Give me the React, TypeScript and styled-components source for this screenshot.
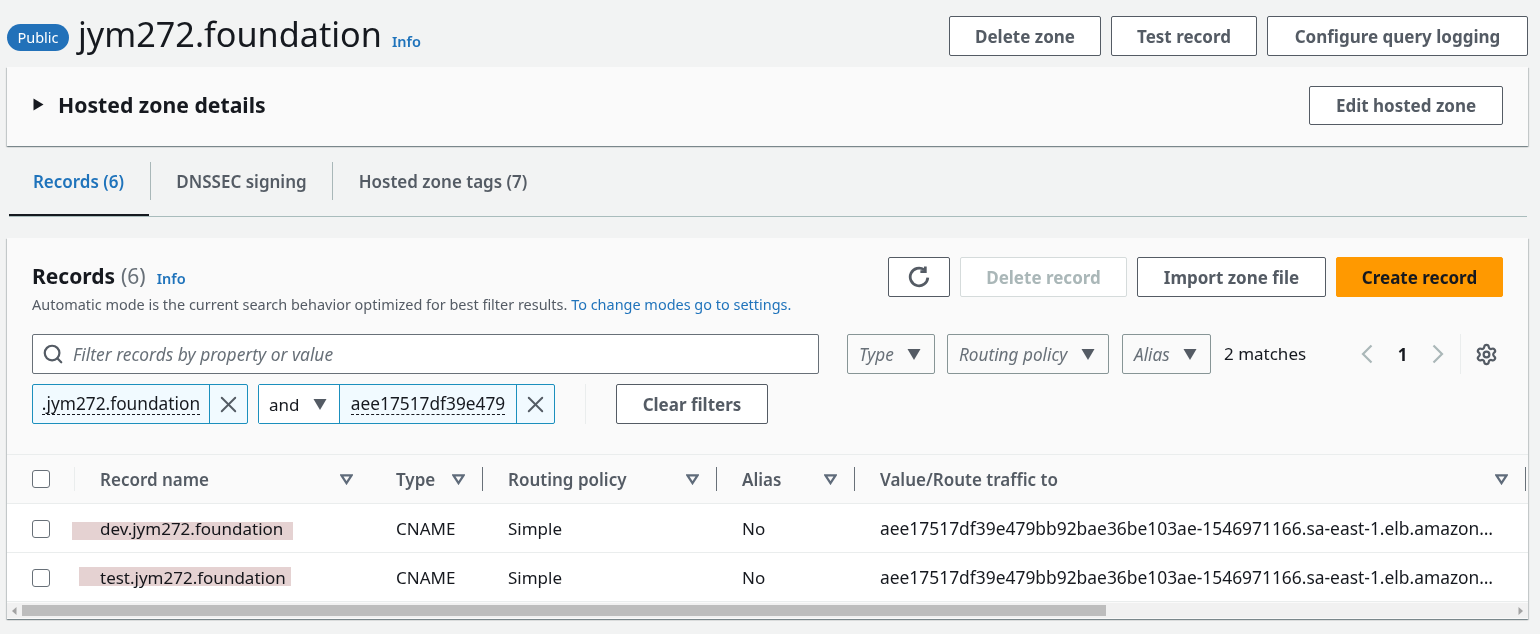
import styled, { createGlobalStyle } from 'styled-components';
import { Search, Settings, X } from 'lucide-react';

const GlobalStyle = createGlobalStyle`
	html, body {
		margin: 0;
		background: #f2f3f3;
		color: #16191f;
		font-family: "Noto Sans", "Open Sans", sans-serif;
	}
	a { text-decoration: none; }
	* { box-sizing: border-box; }
`;

const Page = styled.div`
	width: 1540px;
	height: 634px;
	overflow: hidden;
	padding: 16px 12px 0 7px;
`;

const HeaderRow = styled.header`
	display: flex;
	align-items: flex-start;
	justify-content: space-between;
	height: 51px;
`;

const TitleGroup = styled.div`
	display: flex;
	align-items: center;
	height: 36px;
`;

const Badge = styled.span`
	display: inline-flex;
	align-items: center;
	justify-content: center;
	width: 62px;
	height: 27px;
	margin: 6px 9px 0 0;
	border-radius: 14px;
	background: #2271b9;
	color: #fff;
	font-size: 14.5px;
`;

const Title = styled.h1`
	margin: 0;
	font-size: 34.2px;
	font-weight: 400;
	line-height: 36px;
`;

const InfoLink = styled.a`
	color: #1f73bb;
	font-size: 14.5px;
	font-weight: 600;
`;

const TitleInfo = styled(InfoLink)`
	margin: 14px 0 0 10px;
`;

const ButtonRow = styled.div`
	display: flex;
	gap: 10px;
`;

const Button = styled.button<{ $w: number; $h?: number }>`
	display: inline-flex;
	align-items: center;
	justify-content: center;
	width: ${({ $w }) => $w}px;
	height: ${({ $h }) => $h ?? 40}px;
	padding: 0;
	border: 1px solid #545b64;
	border-radius: 2px;
	background: #fff;
	color: #545b64;
	font-family: inherit;
	font-size: 17px;
	font-weight: 700;
`;

const DisabledButton = styled(Button)`
	border-color: #d5dbdb;
	color: #aab7b8;
`;

const PrimaryButton = styled(Button)`
	border-color: #ff9900;
	background: #ff9900;
	color: #16191f;
`;

const Card = styled.section`
	background: #fafafa;
	box-shadow: 0 1px 1px 0 rgba(0, 28, 36, 0.3), 1px 1px 1px 0 rgba(0, 28, 36, 0.15),
		-1px 1px 1px 0 rgba(0, 28, 36, 0.15);
`;

const DetailsCard = styled(Card)`
	display: flex;
	align-items: center;
	justify-content: space-between;
	height: 79px;
	padding: 0 25px 2px 26px;
`;

const DetailsTitle = styled.h2`
	display: flex;
	align-items: center;
	gap: 14px;
	margin: 0 0 2px;
	font-size: 21.2px;
	font-weight: 700;
`;

const Caret = styled.svg`
	width: 11px;
	height: 13px;
	fill: #16191f;
`;

const Tabs = styled.nav`
	display: flex;
	align-items: flex-start;
	height: 71px;
	margin: 0 1px 21px 2px;
	padding-top: 16px;
	border-bottom: 1px solid #a9bcbc;
`;

const Tab = styled.a<{ $active?: boolean; $w: number; $divider?: boolean }>`
	position: relative;
	display: flex;
	align-items: center;
	justify-content: center;
	width: ${({ $w }) => $w}px;
	height: 38px;
	padding-right: ${({ $active }) => ($active ? 2 : 0)}px;
	border-right: ${({ $divider }) => ($divider ? '1px solid #a9b7b8' : 'none')};
	color: ${({ $active }) => ($active ? '#1f73bb' : '#545b64')};
	font-size: 17px;
	font-weight: 600;
	&::after {
		content: '';
		display: ${({ $active }) => ($active ? 'block' : 'none')};
		position: absolute;
		left: 0;
		top: 52px;
		width: 140px;
		height: 2px;
		background: #16191f;
	}
`;

const RecordsCard = styled(Card)`
	height: 381px;
	padding-top: 19px;
`;

const RecordsTop = styled.div`
	display: flex;
	justify-content: space-between;
	padding: 0 25px;
	height: 77px;
`;

const Heading = styled.h2`
	margin: 6px 0 0;
	font-size: 21px;
	font-weight: 700;
	line-height: 26px;
`;

const Count = styled.span`
	margin-left: 6px;
	color: #687078;
	font-weight: 400;
`;

const HeadingInfo = styled(InfoLink)`
	margin-left: 11px;
`;

const Description = styled.p`
	margin: 4px 0 0;
	color: #545b64;
	font-size: 14.46px;
	line-height: 20px;
`;

const Link = styled.a`
	color: #1f73bb;
`;

const FilterRow = styled.div`
	display: flex;
	align-items: center;
	height: 40px;
	padding-left: 25px;
`;

const SearchBox = styled.div`
	display: flex;
	align-items: center;
	gap: 9px;
	width: 787px;
	height: 40px;
	margin-right: 28px;
	padding-left: 9px;
	border: 1px solid #687078;
	border-radius: 2px;
	background: #fff;
	color: #545b64;
`;

const Italic = styled.span`
	color: #687078;
	font-size: 17.2px;
	font-style: italic;
`;

const Placeholder = styled(Italic)`
	font-size: 17.4px;
`;

const Select = styled.div<{ $w: number; $mr: number }>`
	display: flex;
	align-items: center;
	justify-content: space-between;
	width: ${({ $w }) => $w}px;
	height: 40px;
	margin-right: ${({ $mr }) => $mr}px;
	padding: 0 13px 0 11px;
	border: 1px solid #879596;
	border-radius: 2px;
`;

const DownFill = styled.svg`
	flex: none;
	width: 14px;
	height: 11px;
	fill: #545b64;
`;

const Matches = styled.span`
	width: 136px;
	margin-bottom: 1px;
	font-size: 17px;
`;

const Pager = styled.div`
	display: flex;
	align-items: center;
	height: 40px;
`;

const PagerChevron = styled.svg`
	width: 13px;
	height: 20px;
	fill: none;
	stroke: #aab7b8;
	stroke-width: 2.2;
`;

const PageNumber = styled.span`
	width: 59px;
	color: #16191f;
	font-size: 17px;
	font-weight: 700;
	text-align: center;
`;

const PagerDivider = styled.div`
	width: 1px;
	height: 40px;
	margin: 0 14px 0 15px;
	background: #eaeded;
`;

const TokenRow = styled.div`
	display: flex;
	align-items: center;
	height: 40px;
	margin-top: 10px;
	padding-left: 25px;
`;

const Token = styled.div<{ $mr?: number }>`
	display: flex;
	height: 40px;
	margin-right: ${({ $mr }) => $mr ?? 0}px;
	border: 1px solid #1b8fbd;
	border-radius: 2px;
	background: #f1faff;
`;

const TokenLabel = styled.span<{ $w: number }>`
	display: flex;
	align-items: center;
	justify-content: center;
	width: ${({ $w }) => $w}px;
	font-size: 17.3px;
`;

const Dashed = styled.span`
	border-bottom: 1px dashed #16191f;
	line-height: 21px;
	white-space: nowrap;
`;

const TokenClose = styled.span`
	display: flex;
	align-items: center;
	justify-content: center;
	width: 38px;
	border-left: 1px solid #1b8fbd;
	color: #545b64;
`;

const TokenAnd = styled.span`
	display: flex;
	align-items: center;
	gap: 13px;
	width: 81px;
	padding-left: 10px;
	border-right: 1px solid #1b8fbd;
	background: #fff;
	font-size: 17px;
`;

const RowDivider = styled.div`
	width: 1px;
	height: 40px;
	margin: 0 30px;
	background: #eaeded;
`;

const Table = styled.div`
	margin-top: 30px;
	border-top: 1px solid #eaeded;
`;

const Row = styled.div<{ $head?: boolean }>`
	display: grid;
	grid-template-columns: 67px 296px 112px 234px 138px 671px;
	height: 49px;
	border-bottom: 1px solid #eaeded;
	background: ${({ $head }) => ($head ? '#fafafa' : '#fff')};
	font-size: 17px;
`;

const CheckCell = styled.div<{ $body?: boolean }>`
	display: flex;
	align-items: center;
	padding: ${({ $body }) => ($body ? '2px' : '0')} 0 0 25px;
`;

const Checkbox = styled.span`
	width: 18px;
	height: 18px;
	border: 1.5px solid #687078;
	border-radius: 3px;
	background: #fff;
`;

const HeadCell = styled.div<{ $light?: boolean }>`
	position: relative;
	display: flex;
	align-items: center;
	justify-content: space-between;
	padding: 0 17px 0 26px;
	color: #545b64;
	font-weight: 600;
	&::before {
		content: '';
		position: absolute;
		left: ${({ $light }) => ($light ? 0 : 'auto')};
		right: ${({ $light }) => ($light ? 'auto' : '-1px')};
		top: 12px;
		width: 1px;
		height: 24px;
		background: ${({ $light }) => ($light ? '#eaeded' : '#687078')};
	}
`;

const SortIcon = styled.svg`
	width: 13px;
	height: 11px;
	fill: none;
	stroke: #5f6b7a;
	stroke-width: 2.4;
`;

const Cell = styled.div`
	position: relative;
	display: flex;
	align-items: center;
	min-width: 0;
	padding: 0 28px 0 26px;
`;

const Ellipsis = styled.span`
	overflow: hidden;
	font-size: 17.4px;
	white-space: nowrap;
	text-overflow: ellipsis;
`;

const Redaction = styled.span<{ $left: number; $width: number; $top: number; $height: number }>`
	position: absolute;
	left: ${({ $left }) => $left}px;
	top: ${({ $top }) => $top}px;
	width: ${({ $width }) => $width}px;
	height: ${({ $height }) => $height}px;
	background: #e5d2d2;
	mix-blend-mode: multiply;
`;

const Scrollbar = styled.div`
	display: flex;
	align-items: center;
	height: 15px;
	margin-top: 1px;
	background: #f1f1f1;
`;

const ScrollArrow = styled.svg`
	flex: none;
	width: 15px;
	height: 8px;
	fill: #a3a3a3;
`;

const ScrollTrack = styled.div`
	flex: 1;
	height: 11px;
`;

const ScrollThumb = styled.div`
	width: 1084px;
	height: 11px;
	background: #bdbdbd;
`;

const RefreshIcon = () => (
	<svg width="22" height="22" viewBox="0 0 16 16" fill="none" stroke="#545b64" strokeWidth="2">
		<path d="M14.4 8.4a6.4 6.4 0 1 1-2.6-5.6" />
		<path d="M12.6 0.4v3.6H9" />
	</svg>
);

const Down = () => (
	<DownFill viewBox="0 0 14 11">
		<path d="M0.5 0h13L7 11z" />
	</DownFill>
);

const Sort = () => (
	<SortIcon viewBox="0 0 14 12">
		<path d="M1.5 1.5h11L7 10z" />
	</SortIcon>
);

const records = [
	{ name: 'dev.jym272.foundation', mark: { left: -2, width: 221, top: 18, height: 18 } },
	{ name: 'test.jym272.foundation', mark: { left: 5, width: 212, top: 14, height: 19 } },
];

const TARGET = 'aee17517df39e479bb92bae36be103ae-1546971166.sa-east-1.elb.amazonaws.com.';

const App = () => (
	<>
		<GlobalStyle />
		<Page>
			<HeaderRow>
				<TitleGroup>
					<Badge>Public</Badge>
					<Title>jym272.foundation</Title>
					<TitleInfo href="#">Info</TitleInfo>
				</TitleGroup>
				<ButtonRow>
					<Button $w={152}>Delete zone</Button>
					<Button $w={146}>Test record</Button>
					<Button $w={261}>Configure query logging</Button>
				</ButtonRow>
			</HeaderRow>

			<DetailsCard>
				<DetailsTitle>
					<Caret viewBox="0 0 11 13">
						<path d="M0.5 0.5L10.5 6.5L0.5 12.5z" />
					</Caret>
					Hosted zone details
				</DetailsTitle>
				<Button $w={194} $h={39}>Edit hosted zone</Button>
			</DetailsCard>

			<Tabs>
				<Tab $active $w={142} $divider>Records (6)</Tab>
				<Tab $w={182} $divider>DNSSEC signing</Tab>
				<Tab $w={220}>Hosted zone tags (7)</Tab>
			</Tabs>

			<RecordsCard>
				<RecordsTop>
					<div>
						<Heading>
							Records<Count>(6)</Count>
							<HeadingInfo href="#">Info</HeadingInfo>
						</Heading>
						<Description>
							Automatic mode is the current search behavior optimized for best filter results.{' '}
							<Link href="#">To change modes go to settings.</Link>
						</Description>
					</div>
					<ButtonRow>
						<Button $w={62}>
							<RefreshIcon />
						</Button>
						<DisabledButton $w={167}>Delete record</DisabledButton>
						<Button $w={189}>Import zone file</Button>
						<PrimaryButton $w={167}>Create record</PrimaryButton>
					</ButtonRow>
				</RecordsTop>

				<FilterRow>
					<SearchBox>
						<Search size={22} strokeWidth={2.4} />
						<Placeholder>Filter records by property or value</Placeholder>
					</SearchBox>
					<Select $w={88} $mr={12}>
						<Italic>Type</Italic>
						<Down />
					</Select>
					<Select $w={162} $mr={13}>
						<Italic>Routing policy</Italic>
						<Down />
					</Select>
					<Select $w={89} $mr={13}>
						<Italic>Alias</Italic>
						<Down />
					</Select>
					<Matches>2 matches</Matches>
					<Pager>
						<PagerChevron viewBox="0 0 13 20">
							<path d="M11.5 1.5L3 10l8.5 8.5" />
						</PagerChevron>
						<PageNumber>1</PageNumber>
						<PagerChevron viewBox="0 0 13 20">
							<path d="M1.5 1.5L10 10l-8.5 8.5" />
						</PagerChevron>
						<PagerDivider />
						<Settings size={23} color="#545b64" strokeWidth={2.3} />
					</Pager>
				</FilterRow>

				<TokenRow>
					<Token $mr={10}>
						<TokenLabel $w={176}>
							<Dashed>.jym272.foundation</Dashed>
						</TokenLabel>
						<TokenClose>
							<X size={27} strokeWidth={1.7} />
						</TokenClose>
					</Token>
					<Token>
						<TokenAnd>
							and <Down />
						</TokenAnd>
						<TokenLabel $w={176}>
							<Dashed>aee17517df39e479</Dashed>
						</TokenLabel>
						<TokenClose>
							<X size={27} strokeWidth={1.7} />
						</TokenClose>
					</Token>
					<RowDivider />
					<Button $w={152}>Clear filters</Button>
				</TokenRow>

				<Table>
					<Row $head>
						<CheckCell>
							<Checkbox />
						</CheckCell>
						<HeadCell $light>
							Record name
							<Sort />
						</HeadCell>
						<HeadCell>
							Type
							<Sort />
						</HeadCell>
						<HeadCell>
							Routing policy
							<Sort />
						</HeadCell>
						<HeadCell>
							Alias
							<Sort />
						</HeadCell>
						<HeadCell>
							Value/Route traffic to
							<Sort />
						</HeadCell>
					</Row>
					{records.map((record) => (
						<Row key={record.name}>
							<CheckCell $body>
								<Checkbox />
							</CheckCell>
							<Cell>
								{record.name}
								<Redaction
									$left={record.mark.left}
									$width={record.mark.width}
									$top={record.mark.top}
									$height={record.mark.height}
								/>
							</Cell>
							<Cell>CNAME</Cell>
							<Cell>Simple</Cell>
							<Cell>No</Cell>
							<Cell>
								<Ellipsis>{TARGET}</Ellipsis>
							</Cell>
						</Row>
					))}
					<Scrollbar>
						<ScrollArrow viewBox="0 0 15 8">
							<path d="M9.5 0v8L5 4z" />
						</ScrollArrow>
						<ScrollTrack>
							<ScrollThumb />
						</ScrollTrack>
						<ScrollArrow viewBox="0 0 15 8">
							<path d="M5.5 0v8L10 4z" />
						</ScrollArrow>
					</Scrollbar>
				</Table>
			</RecordsCard>
		</Page>
	</>
);

export default App;
